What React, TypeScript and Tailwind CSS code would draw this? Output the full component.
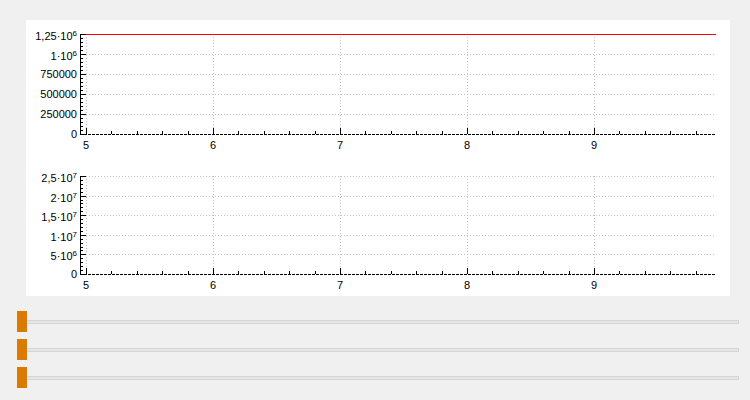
import React from 'react'

type Label = { base: string; exp?: string }

type PlotProps = {
  y0: number
  yTop: number
  labels: Label[]
  line?: boolean
}

const AXIS_X = 80
const X_START = 86
const X_UNIT = 127
const X_END = 716
const FONT = '"Liberation Sans", Arial, sans-serif'

function Plot({ y0, yTop, labels, line }: PlotProps) {
  const majors = labels.length - 1
  const step = (y0 - yTop) / majors
  const xMajors = [5, 6, 7, 8, 9].map((v) => X_START + (v - 5) * X_UNIT)
  const xMinors: number[] = []
  for (let i = 0; i < 25; i++) {
    const x = X_START + (i * X_UNIT) / 5
    if (i % 5 !== 0 && x < X_END) xMinors.push(Math.round(x))
  }
  const yMinors: number[] = []
  for (let i = 0; i < majors * 5; i++) {
    if (i % 5 !== 0) yMinors.push(Math.round(y0 - (i * step) / 5))
  }

  return (
    <g>
      {/* grid */}
      {labels.slice(1).map((_, i) => {
        const y = Math.round(y0 - (i + 1) * step) + 0.5
        return (
          <line key={'hg' + i} x1={AXIS_X} x2={X_END} y1={y} y2={y} stroke="#c4c4c4" strokeDasharray="1 2" />
        )
      })}
      {xMajors.map((x) => (
        <line key={'vg' + x} x1={x + 0.5} x2={x + 0.5} y1={yTop} y2={y0} stroke="#c4c4c4" strokeDasharray="1 2" />
      ))}

      {/* data */}
      {line && <line x1={AXIS_X} x2={X_END} y1={yTop + 0.5} y2={yTop + 0.5} stroke="#ff0000" />}

      {/* y axis */}
      <line x1={AXIS_X + 0.5} x2={AXIS_X + 0.5} y1={yTop} y2={y0 + 1} stroke="#000" />
      {labels.map((_, i) => {
        const y = Math.round(y0 - i * step) + 0.5
        return <line key={'yt' + i} x1={AXIS_X} x2={AXIS_X + 6} y1={y} y2={y} stroke="#000" />
      })}
      {yMinors.map((y) => (
        <line key={'ym' + y} x1={AXIS_X} x2={AXIS_X + 3} y1={y + 0.5} y2={y + 0.5} stroke="#000" />
      ))}

      {/* x axis */}
      <line x1={AXIS_X} x2={X_END} y1={y0 + 0.5} y2={y0 + 0.5} stroke="#000" strokeDasharray="3 1" />
      {xMajors.map((x) => (
        <line key={'xt' + x} x1={x + 0.5} x2={x + 0.5} y1={y0 - 6} y2={y0} stroke="#000" />
      ))}
      {xMinors.map((x) => (
        <line key={'xm' + x} x1={x + 0.5} x2={x + 0.5} y1={y0 - 3} y2={y0} stroke="#000" />
      ))}

      {/* labels */}
      <g fontFamily={FONT} fontSize={11} fill="#000">
        {labels.map((l, i) => {
          const y = Math.round(y0 - i * step) + (l.exp ? 6 : 4)
          return (
            <text key={'yl' + i} x={77} y={y} textAnchor="end">
              {l.base}
              {l.exp && (
                <tspan fontSize={8} dy={-4}>
                  {l.exp}
                </tspan>
              )}
            </text>
          )
        })}
        {xMajors.map((x, i) => (
          <text key={'xl' + x} x={x} y={y0 + 15} textAnchor="middle">
            {5 + i}
          </text>
        ))}
      </g>
    </g>
  )
}

function Slider() {
  return (
    <div className="relative flex items-center h-[21px] w-[722px]">
      <div className="h-[4px] w-full border border-[#d4d4d2] bg-[#e6e6e4]" />
      <div className="absolute left-0 top-0 h-[21px] w-[10px] bg-[#db7a00]" />
    </div>
  )
}

export default function App() {
  const top: Label[] = [
    { base: '0' },
    { base: '250000' },
    { base: '500000' },
    { base: '750000' },
    { base: '1·10', exp: '6' },
    { base: '1,25·10', exp: '6' },
  ]
  const bottom: Label[] = [
    { base: '0' },
    { base: '5·10', exp: '6' },
    { base: '1·10', exp: '7' },
    { base: '1,5·10', exp: '7' },
    { base: '2·10', exp: '7' },
    { base: '2,5·10', exp: '7' },
  ]

  return (
    <div className="w-[750px] h-[400px] bg-[#f0f0f0] pt-[20px] overflow-hidden">
      <div className="ml-[26px] w-[704px] h-[276px] bg-white">
        <svg width={704} height={276} shapeRendering="crispEdges">
          <g transform="translate(-26,-20)">
            <Plot y0={134} yTop={34} labels={top} line />
            <Plot y0={274} yTop={176} labels={bottom} />
          </g>
        </svg>
      </div>
      <div className="ml-[17px] mt-[15px] flex flex-col gap-[7px]">
        <Slider />
        <Slider />
        <Slider />
      </div>
    </div>
  )
}
